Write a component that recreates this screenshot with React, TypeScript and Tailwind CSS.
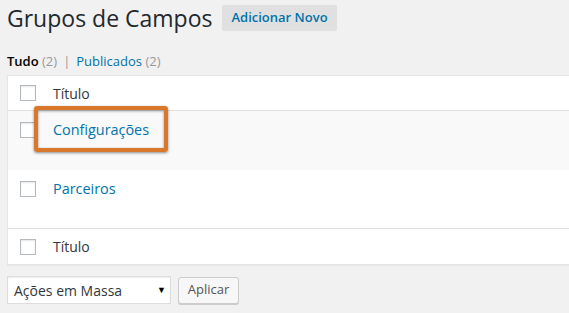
export default function App() {
  return (
    <div className="w-[569px] h-[313px] overflow-hidden bg-[#f1f1f1] font-['Open_Sans',sans-serif] text-[13px] text-[#444]">
      <div className="pl-[7px] pt-[5px]">
        <div className="flex items-center h-[26px]">
          <h1 className="text-[23px] leading-[26px] font-normal text-[#23282d]">Grupos de Campos</h1>
          <button className="ml-[10px] h-[26px] px-[9px] bg-[#e0e0e0] text-[#0073aa] font-semibold text-[13px] rounded-[2px]">
            Adicionar Novo
          </button>
        </div>

        <ul className="flex items-center mt-[21px] h-[20px] text-[13px] text-[#666]">
          <li>
            <span className="font-semibold text-black">Tudo</span>{' '}
            <span className="text-[#999]">(2)</span>
            <span className="mx-[6px] text-[#999]">|</span>
          </li>
          <li>
            <span className="text-[#0073aa]">Publicados</span>{' '}
            <span className="text-[#999]">(2)</span>
          </li>
        </ul>

        <div className="mt-[3px] w-[600px] bg-white border border-[#e5e5e5] shadow-[0_1px_1px_rgba(0,0,0,0.04)]">
          <Row className="h-[35px] border-b border-[#e1e1e1]">
            <span className="text-[14px] text-[#32373c]">Título</span>
          </Row>
          <Row top className="h-[59px] bg-[#f9f9f9]">
            <span className="relative text-[14.4px] text-[#0073aa]">
              Configurações
              <span className="absolute left-[-19px] top-[-13px] w-[134px] h-[46px] rounded-[3px] border-[4px] border-[#d9782a] shadow-[0_1px_3px_rgba(0,0,0,0.45),inset_0_1px_3px_rgba(0,0,0,0.4)]" />
            </span>
          </Row>
          <Row top className="h-[59px] border-b border-[#e1e1e1]">
            <span className="text-[14.4px] text-[#0073aa]">Parceiros</span>
          </Row>
          <Row className="h-[35px]">
            <span className="text-[14px] text-[#32373c]">Título</span>
          </Row>
        </div>

        <div className="flex items-center gap-[7px] mt-[11px]">
          <div className="flex items-center justify-between w-[164px] h-[28px] bg-white border border-[#ddd] shadow-[inset_0_1px_2px_rgba(0,0,0,0.07)] pl-[6px] pr-[4px] text-[14px] text-[#32373c]">
            <span>Ações em Massa</span>
            <span className="text-[9px] text-black">▼</span>
          </div>
          <button className="h-[27px] w-[61px] bg-[#f7f7f7] border border-[#ccc] rounded-[3px] shadow-[0_1px_0_#ccc] text-[13px] text-[#555]">
            Aplicar
          </button>
        </div>
      </div>
    </div>
  );
}

function Row({
  className = '',
  top = false,
  children,
}: {
  className?: string;
  top?: boolean;
  children: React.ReactNode;
}) {
  return (
    <div className={`flex ${top ? 'items-start pt-[8px]' : 'items-center'} ${className}`}>
      <span
        className={`ml-[12px] mr-[17px] w-[16px] h-[16px] shrink-0 border border-[#b4b9be] bg-white shadow-[inset_0_1px_2px_rgba(0,0,0,0.1)] ${
          top ? 'mt-[3px]' : ''
        }`}
      />
      {children}
    </div>
  );
}
